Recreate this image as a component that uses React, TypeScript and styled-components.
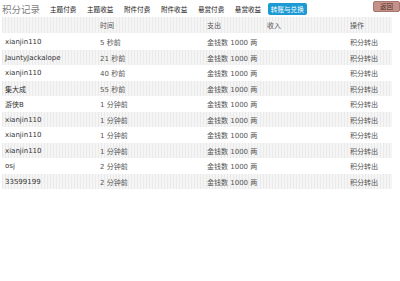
import React from "react";
import styled, { createGlobalStyle } from "styled-components";

const Global = createGlobalStyle`
  html, body { margin: 0; padding: 0; background: #fff; }
  body { font-family: "DejaVu Sans", Verdana, "Noto Sans CJK SC", sans-serif; }
`;

const Page = styled.div`
  width: 400px;
  padding: 0 2px 0 2px;
  box-sizing: border-box;
`;

const TopBar = styled.div`
  display: flex;
  align-items: center;
  height: 17px;
`;

const Title = styled.div`
  font-size: 9.5px;
  color: #808080;
  width: 48px;
  flex: none;
  font-family: "Noto Sans CJK SC", sans-serif;
`;

const Tabs = styled.div`
  display: flex;
  align-items: center;
  flex: 1;
`;

const Tab = styled.span<{ $active?: boolean }>`
  font-size: 6.6px;
  font-family: "Noto Sans CJK SC", sans-serif;
  color: ${(p) => (p.$active ? "#fff" : "#222")};
  background: ${(p) => (p.$active ? "#1b9ad3" : "transparent")};
  border-radius: 2px;
  padding: ${(p) => (p.$active ? "2px 3px" : "2px 0")};
  margin-right: ${(p) => (p.$active ? "0" : "10.6px")};
  margin-left: ${(p) => (p.$active ? "-4px" : "0")};
  line-height: 8px;
`;

const BackButton = styled.span`
  font-size: 6.5px;
  font-family: "Noto Sans CJK SC", sans-serif;
  color: #4a2a24;
  background: #c4928a;
  border: 1px solid #a8756d;
  border-radius: 2px;
  padding: 1px 6px;
  line-height: 7px;
  margin-top: -5px;
  margin-right: -2px;
`;

const Table = styled.div`
  width: 390px;
  display: flex;
  flex-direction: column;
`;

const stripes = `repeating-linear-gradient(90deg, #eaeaea 0 1px, #f5f5f5 1px 3px)`;

const Row = styled.div<{ $striped?: boolean; $head?: boolean }>`
  display: grid;
  grid-template-columns: 95px 107px 60px 83px 1fr;
  align-items: center;
  height: ${(p) => (p.$head ? "16px" : "15.5px")};
  margin-bottom: ${(p) => (p.$head ? "1.3px" : "0")};
  background: ${(p) => (p.$striped ? stripes : "#fff")};
  padding-left: 3px;
  font-size: 7px;
  color: ${(p) => (p.$head ? "#555" : "#333")};
`;

const Cell = styled.span<{ $muted?: boolean }>`
  white-space: nowrap;
  color: ${(p) => (p.$muted ? "#555" : "inherit")};
`;

const rows = [
  ["xianjin110", "5 秒前"],
  ["JauntyJackalope", "21 秒前"],
  ["xianjin110", "40 秒前"],
  ["集大成", "55 秒前"],
  ["游侠B", "1 分钟前"],
  ["xianjin110", "1 分钟前"],
  ["xianjin110", "1 分钟前"],
  ["xianjin110", "1 分钟前"],
  ["osj", "2 分钟前"],
  ["33599199", "2 分钟前"],
];

export default function App() {
  return (
    <Page>
      <Global />
      <TopBar>
        <Title>积分记录</Title>
        <Tabs>
          <Tab>主题付费</Tab>
          <Tab>主题收益</Tab>
          <Tab>附件付费</Tab>
          <Tab>附件收益</Tab>
          <Tab>悬赏付费</Tab>
          <Tab>悬赏收益</Tab>
          <Tab $active>转账与兑换</Tab>
        </Tabs>
        <BackButton>返回</BackButton>
      </TopBar>
      <Table>
        <Row $head $striped>
          <Cell></Cell>
          <Cell>时间</Cell>
          <Cell>支出</Cell>
          <Cell>收入</Cell>
          <Cell>操作</Cell>
        </Row>
        {rows.map((r, i) => (
          <Row key={i} $striped={i % 2 === 1}>
            <Cell>{r[0]}</Cell>
            <Cell $muted>{r[1]}</Cell>
            <Cell $muted>金钱数 1000 两</Cell>
            <Cell></Cell>
            <Cell $muted>积分转出</Cell>
          </Row>
        ))}
      </Table>
    </Page>
  );
}
